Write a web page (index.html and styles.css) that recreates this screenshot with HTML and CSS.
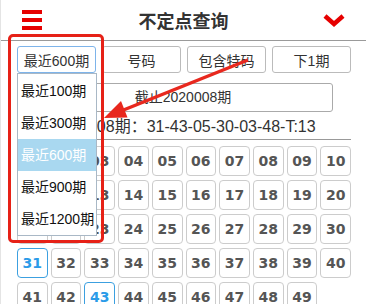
FILE: index.html
```html
<!DOCTYPE html>
<html lang="zh-CN">
<head>
  <meta charset="UTF-8" />
  <meta name="viewport" content="width=device-width, initial-scale=1.0"/>
  <title>不定点查询</title>
  <link rel="stylesheet" href="styles.css">
</head>
<body>

  <div class="header">
    <div class="menu">
      <span></span><span></span><span></span>
    </div>
    <h1>不定点查询</h1>
    <svg class="chevron" width="24" height="13" viewBox="0 0 24 13">
      <polyline points="3,2 12,10 21,2" fill="none" stroke="#e60000" stroke-width="4.5"/>
    </svg>
  </div>

  <div class="tools">
    <div class="select">最近600期</div>
    <button>号码</button>
    <button>包含特码</button>
    <button>下1期</button>
  </div>

  <div class="period">截止2020008期</div>

  <div class="result">2020008期：31-43-05-30-03-48-T:13</div>

  <div class="balls" id="balls"></div>

  <ul class="options">
    <li>最近100期</li>
    <li>最近300期</li>
    <li class="active">最近600期</li>
    <li>最近900期</li>
    <li>最近1200期</li>
  </ul>

  <div class="mark"></div>

  <svg class="arrow" width="366" height="304" viewBox="0 0 366 304">
    <line x1="247" y1="60" x2="120" y2="111" stroke="#e8281e" stroke-width="3.5"/>
    <polygon points="103,118 126.5,117.5 120,101" fill="#e8281e"/>
  </svg>

  <script>
    const hits = [31, 43];
    const balls = document.getElementById("balls");
    for (let n = 1; n <= 49; n++) {
      const b = document.createElement("div");
      b.className = hits.includes(n) ? "ball hit" : "ball";
      b.textContent = n < 10 ? "0" + n : n;
      balls.appendChild(b);
    }
  </script>
</body>
</html>
```

FILE: styles.css
```css
body {
  margin: 0;
  font-family: "Liberation Sans", "Noto Sans CJK SC", sans-serif;
  font-size: 14px;
  color: #333;
  background: #fff;
  position: relative;
  height: 304px;
  overflow: hidden;
  border-left: 1px solid #e4e4e4;
}

.header {
  height: 40px;
  border-bottom: 1px solid #9a9a9a;
  display: grid;
  grid-template-columns: 1fr auto 1fr;
  align-items: center;
}

.menu {
  padding-left: 21px;
  display: flex;
  flex-direction: column;
  gap: 4px;
}

.menu span {
  display: block;
  width: 20px;
  height: 4px;
  background: #e60000;
}

h1 {
  margin: 0;
  font-size: 18px;
  font-weight: bold;
  color: #333;
}

.chevron {
  justify-self: end;
  margin-right: 20px;
}

.tools {
  display: grid;
  grid-template-columns: repeat(4, 1fr);
  gap: 6px;
  padding: 5px 15px 0 16px;
}

.tools button,
.select {
  height: 27px;
  font-family: inherit;
  font-size: 14px;
  color: #333;
  background: #fff;
  border: 1px solid #bbb;
  border-radius: 3px;
  padding: 0;
}

.select {
  box-sizing: border-box;
  border-color: #7eb4ea;
  display: flex;
  align-items: center;
  justify-content: center;
}

.period {
  box-sizing: border-box;
  width: 300px;
  height: 29px;
  margin: 10px 0 0 32px;
  border: 1px solid #aaa;
  border-radius: 3px;
  text-align: center;
  line-height: 27px;
}

.result {
  margin: 0 15px 0 16px;
  height: 27px;
  line-height: 30px;
  font-size: 16px;
  text-align: center;
  border-bottom: 1px solid #999;
}

.balls {
  display: grid;
  grid-template-columns: repeat(10, 1fr);
  column-gap: 3px;
  row-gap: 4px;
  margin: 6px 15px 0 16px;
}

.ball {
  box-sizing: border-box;
  height: 30px;
  border: 1px solid #ccc;
  border-radius: 4px;
  font-family: "DejaVu Sans", sans-serif;
  font-weight: bold;
  font-size: 14px;
  color: #555;
  display: flex;
  align-items: center;
  justify-content: center;
}

.ball.hit {
  border-color: #3ca0e0;
  color: #2b9be8;
}

.options {
  position: absolute;
  left: 16px;
  top: 73px;
  width: 80px;
  margin: 0;
  padding: 1px 0 0;
  list-style: none;
  background: #fff;
  border: 1px solid #a9b8c6;
  box-sizing: border-box;
  height: 163px;
}

.options li {
  height: 32px;
  line-height: 32px;
  padding-left: 3px;
  color: #111;
}

.options li.active {
  background: #a9d8f0;
  color: #fff;
}

.mark {
  position: absolute;
  left: 7px;
  top: 34px;
  width: 96px;
  height: 209px;
  box-sizing: border-box;
  border: 3.5px solid #e62117;
  border-radius: 5px;
}

.arrow {
  position: absolute;
  left: 0;
  top: 0;
  pointer-events: none;
}
```
